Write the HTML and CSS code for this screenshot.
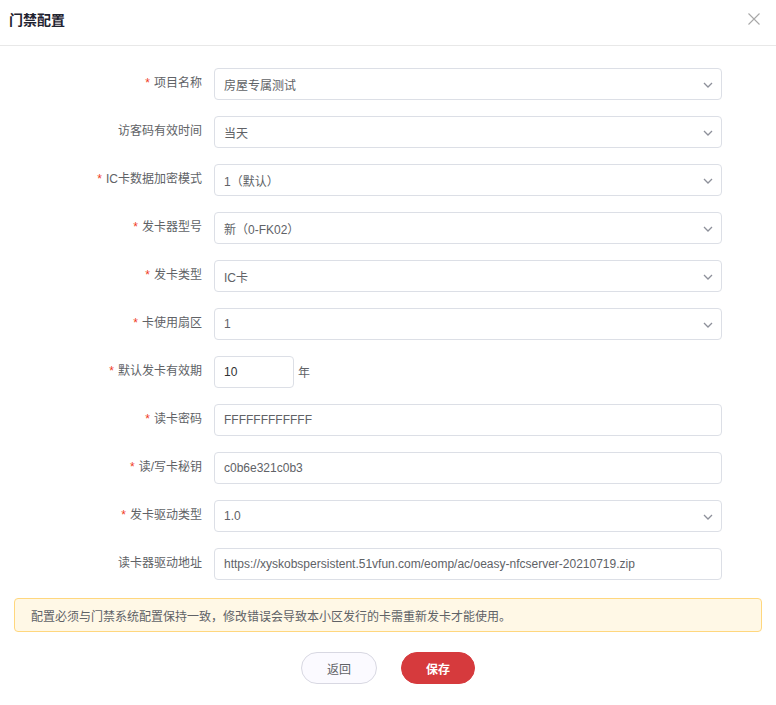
FILE: index.html
```html
<!DOCTYPE html>
<html lang="zh-CN">
<head>
<meta charset="utf-8">
<title>门禁配置</title>
<link rel="stylesheet" href="styles.css">
</head>
<body>
<div class="dialog">
  <div class="header">
    <span class="title">门禁配置</span>
    <svg class="close" width="12" height="12" viewBox="0 0 12 12"><path d="M0.5 0.5L11.5 11.5M11.5 0.5L0.5 11.5" stroke="#a8a8a8" stroke-width="1.1" fill="none"/></svg>
  </div>
  <div class="form">
    <div class="row"><label class="req">项目名称</label><div class="input select">房屋专属测试<svg class="chev" viewBox="0 0 10 6"><path d="M1 1L5 5L9 1" stroke="#8d909a" stroke-width="1.3" fill="none"/></svg></div></div>
    <div class="row"><label>访客码有效时间</label><div class="input select">当天<svg class="chev" viewBox="0 0 10 6"><path d="M1 1L5 5L9 1" stroke="#8d909a" stroke-width="1.3" fill="none"/></svg></div></div>
    <div class="row"><label class="req">IC卡数据加密模式</label><div class="input select">1（默认）<svg class="chev" viewBox="0 0 10 6"><path d="M1 1L5 5L9 1" stroke="#8d909a" stroke-width="1.3" fill="none"/></svg></div></div>
    <div class="row"><label class="req">发卡器型号</label><div class="input select">新（0-FK02）<svg class="chev" viewBox="0 0 10 6"><path d="M1 1L5 5L9 1" stroke="#8d909a" stroke-width="1.3" fill="none"/></svg></div></div>
    <div class="row"><label class="req">发卡类型</label><div class="input select">IC卡<svg class="chev" viewBox="0 0 10 6"><path d="M1 1L5 5L9 1" stroke="#8d909a" stroke-width="1.3" fill="none"/></svg></div></div>
    <div class="row"><label class="req">卡使用扇区</label><div class="input select">1<svg class="chev" viewBox="0 0 10 6"><path d="M1 1L5 5L9 1" stroke="#8d909a" stroke-width="1.3" fill="none"/></svg></div></div>
    <div class="row"><label class="req">默认发卡有效期</label><div class="inline"><div class="input short dark">10</div><span class="unit">年</span></div></div>
    <div class="row"><label class="req">读卡密码</label><div class="input">FFFFFFFFFFFF</div></div>
    <div class="row"><label class="req">读/写卡秘钥</label><div class="input">c0b6e321c0b3</div></div>
    <div class="row"><label class="req">发卡驱动类型</label><div class="input select">1.0<svg class="chev" viewBox="0 0 10 6"><path d="M1 1L5 5L9 1" stroke="#8d909a" stroke-width="1.3" fill="none"/></svg></div></div>
    <div class="row"><label>读卡器驱动地址</label><div class="input">https://xyskobspersistent.51vfun.com/eomp/ac/oeasy-nfcserver-20210719.zip</div></div>
  </div>
  <div class="alert">配置必须与门禁系统配置保持一致，修改错误会导致本小区发行的卡需重新发卡才能使用。</div>
  <div class="actions">
    <button class="btn back">返回</button>
    <button class="btn save">保存</button>
  </div>
</div>
</body>
</html>
```
FILE: styles.css
```css
html, body {
  margin: 0;
  padding: 0;
  background: #ffffff;
}
body {
  font-family: "Liberation Sans", "Noto Sans CJK SC", sans-serif;
  font-size: 12px;
  color: #606266;
}
.dialog {
  width: 776px;
}
.header {
  height: 46px;
  border-bottom: 1px solid #e8e8e8;
  display: flex;
  align-items: center;
  justify-content: space-between;
  padding: 0 16px 8px 9px;
  box-sizing: border-box;
}
.title {
  font-size: 14px;
  font-weight: bold;
  color: #1f2330;
}
.close {
  width: 12px;
  height: 12px;
}
.form {
  padding-top: 22px;
  display: flex;
  flex-direction: column;
  gap: 16px;
}
.row {
  display: grid;
  grid-template-columns: 202px 508px;
  column-gap: 12px;
  align-items: center;
  height: 32px;
}
.row label {
  text-align: right;
  color: #606266;
  font-size: 12px;
  line-height: 16px;
  margin-top: -2px;
}
.row label.req::before {
  content: "*";
  color: #f03c1e;
  margin-right: 4px;
}
.input {
  height: 32px;
  box-sizing: border-box;
  border: 1px solid #dcdfe6;
  border-radius: 4px;
  padding: 0 9px;
  display: flex;
  align-items: center;
  color: #606266;
  font-size: 12px;
  position: relative;
  white-space: nowrap;
}
.input.dark {
  color: #303133;
}
.select .chev {
  position: absolute;
  right: 8px;
  top: 13px;
  width: 10px;
  height: 6px;
}
.inline {
  display: flex;
  align-items: center;
  gap: 4px;
}
.input.short {
  width: 80px;
}
.unit {
  color: #606266;
  margin-top: -2px;
}
.alert {
  margin: 18px 14px 0 14px;
  height: 34px;
  box-sizing: border-box;
  background: #fff8e6;
  border: 1px solid #ffd77e;
  border-radius: 4px;
  display: flex;
  align-items: center;
  padding-left: 16px;
  color: #606266;
  font-size: 12px;
}
.actions {
  display: flex;
  justify-content: center;
  gap: 24px;
  margin-top: 20px;
}
.btn {
  height: 32px;
  border-radius: 16px;
  font-family: "Liberation Sans", "Noto Sans CJK SC", sans-serif;
  font-size: 12px;
  padding: 0;
  cursor: pointer;
}
.back {
  width: 76px;
  background: #fbfaff;
  border: 1px solid #d8d8e2;
  color: #606266;
}
.save {
  width: 74px;
  background: #d63a3d;
  border: 1px solid #d63a3d;
  color: #ffffff;
  font-weight: bold;
}
```
